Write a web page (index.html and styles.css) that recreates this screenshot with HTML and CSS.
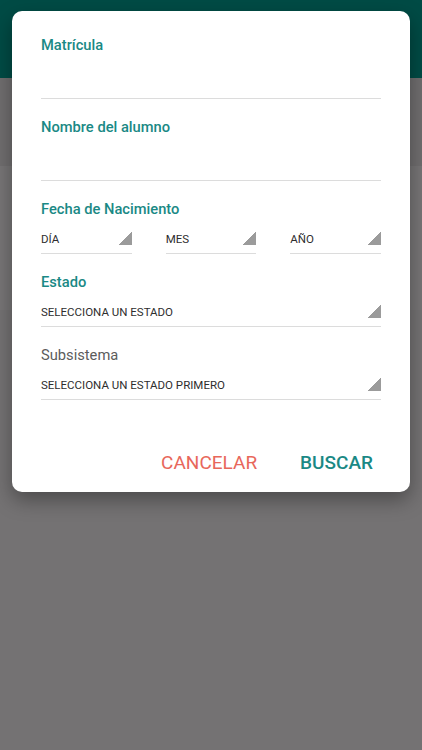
FILE: index.html
```html
<!DOCTYPE html>
<html lang="es">
<head>
    <meta charset="UTF-8">
    <meta name="viewport" content="width=device-width, initial-scale=1.0">
    <title>Buscar alumno</title>
    <link rel="stylesheet" href="styles.css">
</head>
<body>
    <!-- Pantalla de fondo (atenuada) -->
    <div class="app">
        <header class="toolbar"></header>
        <div class="band"></div>
        <div class="card-back"></div>
        <div class="rest"></div>
    </div>

    <!-- Dialogo de busqueda -->
    <div class="dialog">
        <form class="search-form">
            <div class="field">
                <label class="field-label">Matrícula</label>
                <input type="text" class="field-input">
            </div>

            <div class="field">
                <label class="field-label">Nombre del alumno</label>
                <input type="text" class="field-input">
            </div>

            <div class="field">
                <label class="field-label">Fecha de Nacimiento</label>
                <div class="date-row">
                    <div class="spinner"><span>DÍA</span><i class="caret"></i></div>
                    <div class="spinner"><span>MES</span><i class="caret"></i></div>
                    <div class="spinner"><span>AÑO</span><i class="caret"></i></div>
                </div>
            </div>

            <div class="field">
                <label class="field-label">Estado</label>
                <div class="spinner"><span>SELECCIONA UN ESTADO</span><i class="caret"></i></div>
            </div>

            <div class="field">
                <label class="field-label disabled">Subsistema</label>
                <div class="spinner"><span>SELECCIONA UN ESTADO PRIMERO</span><i class="caret"></i></div>
            </div>

            <div class="actions">
                <button type="button" class="btn cancel">CANCELAR</button>
                <button type="submit" class="btn search">BUSCAR</button>
            </div>
        </form>
    </div>
</body>
</html>
```

FILE: styles.css
```css
/* General */
body {
    font-family: Roboto, "Noto Sans", Arial, sans-serif;
    margin: 0;
    padding: 0;
    background-color: #737172;
    color: #333;
}

/* Fondo atenuado */
.app {
    height: 750px;
    display: flex;
    flex-direction: column;
}

.toolbar {
    height: 78px;
    background-color: #004b45;
}

.band {
    height: 88px;
    background-color: #706e6f;
}

.card-back {
    height: 144px;
    background-color: #777576;
}

.rest {
    flex: 1;
    background-color: #747273;
}

/* Dialogo */
.dialog {
    position: absolute;
    top: 11px;
    left: 12px;
    width: 398px;
    height: 481px;
    background: #fff;
    border-radius: 10px;
    box-shadow: 0 8px 20px rgba(0, 0, 0, 0.35);
    box-sizing: border-box;
    padding: 24px 29px 0;
}

.search-form {
    display: flex;
    flex-direction: column;
    gap: 18px;
}

.field-label {
    display: block;
    font-size: 14.7px;
    font-weight: 500;
    line-height: 20px;
    color: #1a8985;
}

.field-label.disabled {
    color: #5c5c5c;
    font-weight: 400;
}

.field-input {
    display: block;
    width: 100%;
    height: 44px;
    padding: 0;
    border: none;
    border-bottom: 1px solid #dcdcdc;
    box-sizing: border-box;
    outline: none;
    background: transparent;
}

/* Selectores */
.date-row {
    display: grid;
    grid-template-columns: repeat(3, 1fr);
    column-gap: 34px;
}

.spinner {
    display: flex;
    align-items: flex-end;
    justify-content: space-between;
    height: 35px;
    padding-bottom: 6px;
    border-bottom: 1px solid #dcdcdc;
    box-sizing: border-box;
    font-size: 11.5px;
    line-height: 16px;
    color: #2e2e2e;
}

.caret {
    width: 14px;
    height: 13px;
    margin-bottom: 2px;
    background: linear-gradient(to bottom right, transparent 50%, #9b9b9b 50%);
}

/* Botones */
.actions {
    display: flex;
    justify-content: flex-end;
    gap: 27px;
    margin-top: 26px;
}

.btn {
    font-family: inherit;
    font-size: 19px;
    height: 36px;
    padding: 0 8px;
    border: none;
    background: transparent;
    cursor: pointer;
}

.cancel {
    color: #e8675b;
}

.search {
    color: #1a8985;
    font-weight: 500;
}
```
